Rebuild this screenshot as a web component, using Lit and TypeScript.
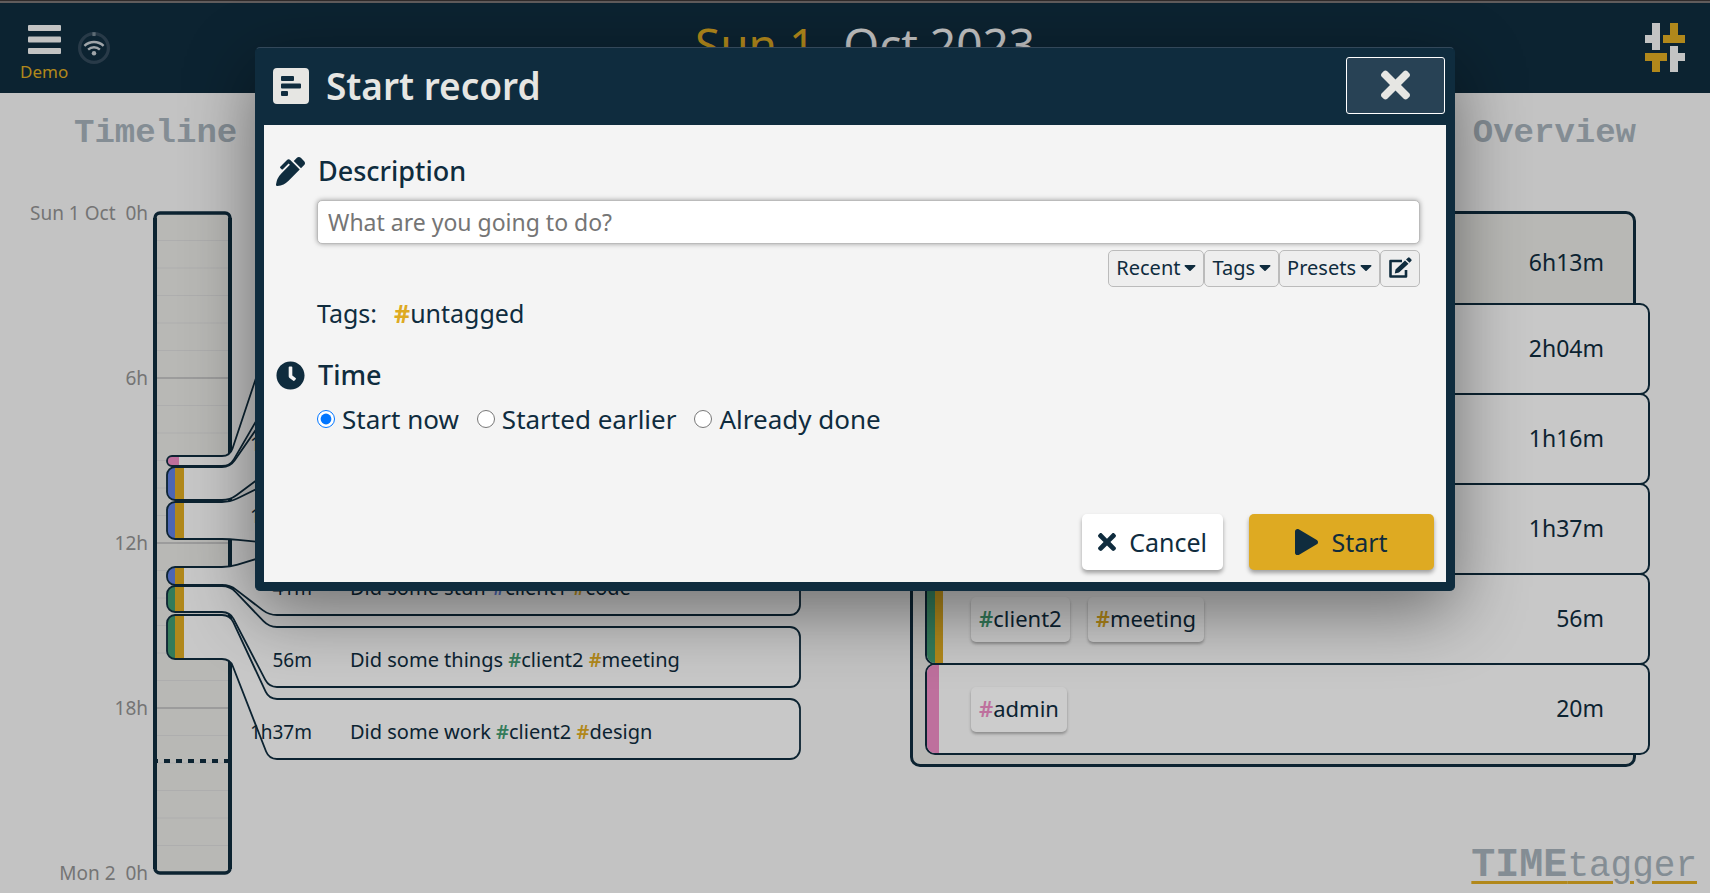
import { LitElement, html, svg, css } from "lit";
import { customElement, property, state } from "lit/decorators.js";

interface TagInfo {
  name: string;
  color: string;
}

interface TimelineRecord {
  from: number;
  to: number;
  duration: string;
  text: string;
  tags: TagInfo[];
  stripes: string[];
}

interface OverviewRow {
  duration: string;
  tags: TagInfo[];
  stripes: string[];
}

const BLUE = "#6080e0";
const GOLD = "#deaa22";
const GREEN = "#419a71";
const PINK = "#ee8dc5";
const NAVY = "#0f2c3e";

const RECORDS: TimelineRecord[] = [
  { from: 456, to: 466, duration: "20m", text: "", tags: [], stripes: [PINK] },
  { from: 467, to: 500, duration: "1h16m", text: "", tags: [], stripes: [BLUE, GOLD] },
  { from: 502, to: 539, duration: "1h23m", text: "", tags: [], stripes: [BLUE, GOLD] },
  {
    from: 567, to: 585, duration: "41m", text: "Did some stuff",
    tags: [{ name: "client1", color: BLUE }, { name: "code", color: GOLD }],
    stripes: [BLUE, GOLD],
  },
  {
    from: 586, to: 612, duration: "56m", text: "Did some things",
    tags: [{ name: "client2", color: GREEN }, { name: "meeting", color: GOLD }],
    stripes: [GREEN, GOLD],
  },
  {
    from: 615, to: 659, duration: "1h37m", text: "Did some work",
    tags: [{ name: "client2", color: GREEN }, { name: "design", color: GOLD }],
    stripes: [GREEN, GOLD],
  },
];

const OVERVIEW: OverviewRow[] = [
  { duration: "2h04m", tags: [], stripes: [BLUE, GOLD] },
  { duration: "1h16m", tags: [], stripes: [BLUE, GOLD] },
  { duration: "1h37m", tags: [], stripes: [GREEN, GOLD] },
  {
    duration: "56m",
    tags: [{ name: "client2", color: GREEN }, { name: "meeting", color: GOLD }],
    stripes: [GREEN, GOLD],
  },
  { duration: "20m", tags: [{ name: "admin", color: PINK }], stripes: [PINK] },
];

const crossIcon = html`<svg viewBox="0 0 352 512" aria-hidden="true"><path fill="currentColor" d="M242.72 256l100.07-100.07c12.28-12.28 12.28-32.19 0-44.48l-22.24-22.24c-12.28-12.28-32.19-12.28-44.48 0L176 189.28 75.93 89.21c-12.28-12.28-32.19-12.28-44.48 0L9.21 111.45c-12.28 12.28-12.28 32.19 0 44.48L109.28 256 9.21 356.07c-12.28 12.28-12.28 32.19 0 44.48l22.24 22.24c12.28 12.28 32.2 12.28 44.48 0L176 322.72l100.07 100.07c12.28 12.28 32.2 12.28 44.48 0l22.24-22.24c12.28-12.28 12.28-32.19 0-44.48L242.72 256z"/></svg>`;

const penIcon = html`<svg viewBox="0 0 512 512" aria-hidden="true"><path fill="currentColor" d="M497.94 74.17l-60.11-60.11c-18.75-18.75-49.16-18.75-67.91 0l-56.55 56.55 128.02 128.02 56.55-56.55c18.75-18.75 18.75-49.15 0-67.91zm-246.8-20.53c-15.62-15.62-40.94-15.62-56.56 0L75.8 172.43c-6.25 6.25-6.25 16.38 0 22.62l22.63 22.63c6.25 6.25 16.38 6.25 22.63 0l101.82-101.82 22.63 22.62L93.95 290.03A327.038 327.038 0 0 0 .17 485.11l-.03.23c-1.7 15.28 11.21 28.2 26.49 26.51a327.02 327.02 0 0 0 195.34-93.8l196.79-196.79-82.77-82.77-84.85-84.85z"/></svg>`;

const clockIcon = html`<svg viewBox="0 0 512 512" aria-hidden="true"><path fill="currentColor" d="M256,8C119,8,8,119,8,256S119,504,256,504,504,393,504,256,393,8,256,8Zm92.49,313h0l-20,25a16,16,0,0,1-22.49,2.5h0l-67-49.72a40,40,0,0,1-15-31.23V112a16,16,0,0,1,16-16h32a16,16,0,0,1,16,16V256l58,42.5A16,16,0,0,1,348.49,321Z"/></svg>`;

const playIcon = html`<svg viewBox="0 0 448 512" aria-hidden="true"><path fill="currentColor" d="M424.4 214.7L72.4 6.6C43.8-10.3 0 6.1 0 47.9V464c0 37.5 40.7 60.1 72.4 41.3l352-208c31.4-18.5 31.5-64.1 0-82.6z"/></svg>`;

const recordIcon = html`<svg viewBox="0 0 36 36" aria-hidden="true"><path fill="currentColor" fill-rule="evenodd" d="M4 0H32a4 4 0 0 1 4 4V32a4 4 0 0 1-4 4H4a4 4 0 0 1-4-4V4a4 4 0 0 1 4-4ZM9 8a1 1 0 0 0-1 1v3a1 1 0 0 0 1 1H20a1 1 0 0 0 1-1V9a1 1 0 0 0-1-1ZM9 15.5a1 1 0 0 0-1 1v3a1 1 0 0 0 1 1H27a1 1 0 0 0 1-1v-3a1 1 0 0 0-1-1ZM9 23a1 1 0 0 0-1 1v3a1 1 0 0 0 1 1H14a1 1 0 0 0 1-1V24a1 1 0 0 0-1-1Z"/></svg>`;

const caretIcon = html`<svg viewBox="0 0 12 8" aria-hidden="true"><path fill="currentColor" d="M1.2 1H10.8a.7.7 0 0 1 .5 1.2L6.6 6.8a.9.9 0 0 1-1.2 0L.7 2.2A.7.7 0 0 1 1.2 1Z"/></svg>`;

const editIcon = html`<svg viewBox="0 0 24 22" aria-hidden="true">
  <path fill="none" stroke="currentColor" stroke-width="2.6" stroke-linejoin="round" d="M14 4H2.5V19.500H18V13"/>
  <path fill="currentColor" d="M7.500 12.500L17 3.500L20.500 6.800L11 15.500L6.800 16.500ZM18 2.600L20 .8a1.200 1.200 0 0 1 1.700 0L23.200 2.300a1.200 1.200 0 0 1 0 1.700L21.500 5.800Z"/>
</svg>`;

@customElement("day-timeline")
export class DayTimeline extends LitElement {
  @property({ attribute: false }) records: TimelineRecord[] = [];

  static styles = css`
    :host {
      display: block;
    }
    .chart {
      display: block;
      width: 100%;
      font-family: "Noto Sans", sans-serif;
    }
    .hour-label {
      font-size: 19px;
      fill: #929292;
      text-anchor: end;
      white-space: pre;
    }
    .record-text {
      font-size: 20px;
      fill: #0f2c3e;
    }
    .record-time {
      font-size: 19px;
      fill: #0f2c3e;
      text-anchor: end;
    }
  `;

  private cardTop(index: number) {
    return 339 + 72 * index;
  }

  private ribbon(r: TimelineRecord, index: number) {
    const top = this.cardTop(index);
    const bottom = top + 60;
    const left = 167;
    const radius = Math.min(8, (r.to - r.from) / 2);
    // Unit step along each slanted connector, used to round its two ends.
    const bend = (y0: number, y1: number) => {
      const dx = 39;
      const len = Math.hypot(dx, y1 - y0);
      return { x: (8 * dx) / len, y: (8 * (y1 - y0)) / len };
    };
    const a = bend(r.from, top);
    const b = bend(r.to, bottom);
    const outline = `M${left + radius} ${r.from} H222 Q230 ${r.from} ${230 + a.x} ${r.from + a.y}
      L${269 - a.x} ${top - a.y} Q269 ${top} 277 ${top} H790 A10 10 0 0 1 800 ${top + 10} V${bottom - 10}
      A10 10 0 0 1 790 ${bottom} H277 Q269 ${bottom} ${269 - b.x} ${bottom - b.y}
      L${230 + b.x} ${r.to + b.y} Q230 ${r.to} 222 ${r.to} H${left + radius}
      A${radius} ${radius} 0 0 1 ${left} ${r.to - radius} V${r.from + radius} A${radius} ${radius} 0 0 1 ${left + radius} ${r.from} Z`;
    const barWidth = r.stripes.length === 1 ? 12 : 8;
    return svg`
      <clipPath id="clip-${index}"><path d=${outline} /></clipPath>
      <path d=${outline} fill="#fafafa" />
      <g clip-path="url(#clip-${index})">
        ${r.stripes.map(
          (c, i) => svg`<rect x=${167 + i * 8} y=${r.from} width=${barWidth + i} height=${r.to - r.from} fill=${c} />`,
        )}
      </g>
      <path d=${outline} fill="none" stroke=${NAVY} stroke-width="1.800" />
      <text class="record-time" x="312" y=${top + 40}>${r.duration}</text>
      ${r.text
        ? svg`<text class="record-text" x="350" y=${top + 40}>${r.text}${r.tags.map(
            (t) => svg`<tspan fill=${t.color} font-weight="600"> #</tspan><tspan>${t.name}</tspan>`,
          )}</text>`
        : null}`;
  }

  render() {
    const hours = Array.from({ length: 23 }, (_, i) => i + 1);
    const labels: [number, string][] = [
      [0, "Sun 1 Oct  0h"],
      [6, "6h"],
      [12, "12h"],
      [18, "18h"],
      [24, "Mon 2  0h"],
    ];
    return html`
      <svg class="chart" viewBox="0 200 855 693" role="img" aria-label="Timeline of records">
        <rect x="155" y="213" width="75" height="660" rx="5" fill="#e6e6e3" />
        ${hours.map(
          (h) => svg`<line x1="157" x2="228" y1=${213 + h * 27.5} y2=${213 + h * 27.5}
            stroke=${h % 6 ? "#dadada" : "#c4c4c4"} stroke-width=${h % 6 ? 1 : 2} />`,
        )}
        <path d="M155 218V869M230 218V869" stroke=${NAVY} stroke-width="4" />
        <rect x="155" y="213" width="75" height="660" rx="5" fill="none" stroke=${NAVY} stroke-width="3.500" />
        <path d="M155 761H230" stroke=${NAVY} stroke-width="4" stroke-dasharray="6 6" stroke-dashoffset="3" />
        ${labels.map(([h, text]) => svg`<text class="hour-label" x="148" y=${220 + h * 27.5}>${text}</text>`)}
        ${this.records.map((r, i) => this.ribbon(r, i))}
      </svg>
    `;
  }
}

@customElement("day-overview")
export class DayOverview extends LitElement {
  @property({ attribute: false }) rows: OverviewRow[] = [];

  static styles = css`
    :host {
      display: block;
    }
    .panel {
      border: 3px solid #0f2c3e;
      border-radius: 10px;
      background: #e6e6e3;
      padding-bottom: 9px;
      font-size: 23px;
      line-height: 32px;
    }
    .total {
      display: flex;
      align-items: center;
      justify-content: flex-end;
      height: 89px;
      padding: 6px 29px 0 0;
      box-sizing: border-box;
    }
    .row {
      display: flex;
      align-items: center;
      height: 92px;
      box-sizing: border-box;
      margin: 0 -17px -2px 12px;
      padding-right: 44px;
      border: 2px solid #0f2c3e;
      border-radius: 10px;
      background: #fafafa;
      overflow: hidden;
    }
    .row:last-child {
      margin-bottom: 0;
    }
    .stripes {
      display: flex;
      align-self: stretch;
      width: 44px;
    }
    .stripe {
      width: 8px;
    }
    .stripe:only-child {
      width: 12px;
    }
    .chips {
      display: flex;
      gap: 18px;
      flex: 1;
    }
    .chip {
      height: 45px;
      padding: 0 8px 2px;
      border: 0;
      border-radius: 5px;
      background: #fff;
      box-shadow: 0 2px 3px rgba(0, 0, 0, 0.3);
      color: #0f2c3e;
      font: inherit;
      font-size: 22px;
    }
    .value {
      padding-bottom: 2px;
    }
    .hash {
      font-weight: 600;
    }
  `;

  render() {
    return html`
      <div class="panel">
        <div class="total">6h13m</div>
        ${this.rows.map(
          (r) => html`<div class="row">
            <div class="stripes">
              ${r.stripes.map((c) => html`<div class="stripe" style="background:${c}"></div>`)}
            </div>
            <div class="chips">
              ${r.tags.map(
                (t) => html`<button class="chip"><span class="hash" style="color:${t.color}">#</span>${t.name}</button>`,
              )}
            </div>
            <div class="value">${r.duration}</div>
          </div>`,
        )}
      </div>
    `;
  }
}

@customElement("record-dialog")
export class RecordDialog extends LitElement {
  @state() private mode = "now";

  static styles = css`
    :host {
      display: block;
      box-sizing: border-box;
      width: 1200px;
      max-width: 90%;
      border-radius: 5px;
      background: #0f2c3e;
      border: 1px solid #33485a;
      border-bottom: 0;
      border-left-color: #0f2c3e;
      border-right-color: #0f2c3e;
      padding: 0 8px 9px;
      box-shadow: 0 20px 70px rgba(0, 0, 0, 0.45);
      color: #0f2c3e;
    }
    svg {
      display: block;
      flex: none;
    }
    button {
      font: inherit;
      color: inherit;
      cursor: pointer;
    }
    .title-bar {
      display: flex;
      align-items: center;
      height: 77px;
      padding: 0 1px 2px 9px;
      box-sizing: border-box;
      color: #e6e6e3;
    }
    .title-bar > svg {
      width: 36px;
    }
    .title {
      flex: 1;
      margin: 0 0 0 17px;
      font-size: 37px;
      font-weight: 600;
      line-height: 48px;
    }
    .close {
      display: flex;
      align-items: center;
      justify-content: center;
      width: 99px;
      height: 57px;
      border: 1px solid #fff;
      border-radius: 3px;
      background: #284255;
    }
    .close svg {
      width: 29px;
    }
    .body {
      display: flex;
      flex-direction: column;
      background: #f4f4f4;
      padding: 26px 12px 12px;
    }
    .heading {
      display: flex;
      align-items: center;
      gap: 13px;
      margin: 0;
      font-size: 27px;
      font-weight: 500;
      line-height: 40px;
    }
    .heading svg {
      width: 29px;
    }
    .indent {
      margin: 0 14px 0 41px;
    }
    .description {
      display: block;
      width: 100%;
      height: 44px;
      box-sizing: border-box;
      margin-top: 9px;
      padding: 0 10px;
      border: 1px solid #bbb;
      border-radius: 5px;
      background: #fff;
      box-shadow: 0 0 5px rgba(0, 0, 0, 0.35);
      font: inherit;
      font-size: 23px;
      color: inherit;
    }
    .description::placeholder {
      color: #757575;
      opacity: 1;
    }
    .tools {
      display: flex;
      justify-content: flex-end;
      margin-top: 6px;
    }
    .tool {
      display: flex;
      align-items: center;
      gap: 4px;
      height: 37px;
      padding: 0 7px 2px;
      border: 1px solid #bbb;
      border-radius: 5px;
      background: #eee;
      font-size: 20px;
    }
    .tool svg {
      width: 12px;
    }
    .tool .edit svg {
      width: 24px;
    }
    .tags {
      display: flex;
      gap: 17px;
      margin-top: 10px;
      font-size: 25px;
      line-height: 32px;
    }
    .hash {
      color: #deaa22;
      font-weight: 700;
    }
    .time {
      margin-top: 26px;
    }
    .choices {
      display: flex;
      gap: 18px;
      border: 0;
      padding: 0;
      margin-top: 8px;
      font-size: 26px;
      line-height: 32px;
    }
    .choice {
      display: flex;
      align-items: center;
      gap: 7px;
    }
    .choice input {
      width: 18px;
      height: 18px;
      margin: 0;
      accent-color: #0075ff;
    }
    .actions {
      display: flex;
      justify-content: flex-end;
      gap: 26px;
      margin-top: 79px;
    }
    .action {
      display: flex;
      align-items: center;
      justify-content: center;
      gap: 13px;
      height: 56px;
      padding: 0 16px;
      border: 0;
      border-radius: 5px;
      background: #fff;
      box-shadow: 0 3px 4px rgba(0, 0, 0, 0.35);
      font-size: 25px;
    }
    .action svg {
      width: 18px;
    }
    .primary {
      min-width: 185px;
      background: #deaa22;
    }
    .primary svg {
      width: 23px;
    }
  `;

  private choice(value: string, label: string) {
    return html`<label class="choice">
      <input type="radio" name="mode" value=${value} .checked=${this.mode === value} @change=${() => (this.mode = value)} />
      ${label}
    </label>`;
  }

  render() {
    return html`
      <header class="title-bar">
        ${recordIcon}
        <h1 class="title">Start record</h1>
        <button class="close" aria-label="Close">${crossIcon}</button>
      </header>
      <div class="body">
        <h2 class="heading">${penIcon}<label for="description">Description</label></h2>
        <div class="indent">
          <input class="description" id="description" type="text" placeholder="What are you going to do?" />
          <div class="tools">
            <button class="tool">Recent ${caretIcon}</button>
            <button class="tool">Tags ${caretIcon}</button>
            <button class="tool">Presets ${caretIcon}</button>
            <button class="tool" aria-label="Edit presets"><span class="edit">${editIcon}</span></button>
          </div>
          <div class="tags"><span>Tags:</span><span><span class="hash">#</span>untagged</span></div>
        </div>
        <h2 class="heading time">${clockIcon}Time</h2>
        <fieldset class="choices indent" aria-label="Time">
          ${this.choice("now", "Start now")} ${this.choice("earlier", "Started earlier")}
          ${this.choice("done", "Already done")}
        </fieldset>
        <div class="actions">
          <button class="action">${crossIcon}Cancel</button>
          <button class="action primary">${playIcon}Start</button>
        </div>
      </div>
    `;
  }
}

@customElement("app-root")
export class AppRoot extends LitElement {
  static styles = css`
    :host {
      display: block;
      position: relative;
      font-family: "Noto Sans", sans-serif;
      color: #0f2c3e;
    }
    .page {
      display: flex;
      flex-direction: column;
      min-height: 100vh;
      box-sizing: border-box;
      border-top: 1px solid #3c3636;
      background: #f4f4f4;
    }
    .top {
      display: flex;
      justify-content: space-between;
      height: 92px;
      box-sizing: border-box;
      border-top: 2px solid #7a7474;
      background: #0f2c3e;
    }
    .side {
      display: flex;
      flex: 1;
      gap: 10px;
      padding: 22px 20px 0;
    }
    .side.end {
      justify-content: flex-end;
      padding: 20px 25px 0;
    }
    .menu {
      display: flex;
      flex-direction: column;
      align-items: center;
      align-self: flex-start;
      gap: 7px;
      padding: 0;
      border: 0;
      background: none;
      font: inherit;
      font-size: 17px;
      line-height: 22px;
      color: #deaa22;
    }
    .menu svg {
      width: 33px;
      height: 29px;
      display: block;
    }
    .sync {
      width: 32px;
      height: 32px;
      margin-top: 7px;
    }
    .logo {
      width: 40px;
      height: 49px;
    }
    .date {
      display: flex;
      gap: 28px;
      padding: 11px 0 0 30px;
      font-size: 46px;
      line-height: 60px;
      color: #f4f4f4;
    }
    .day {
      color: #deaa22;
    }
    .main {
      display: flex;
      flex: 1;
    }
    .column {
      display: flex;
      flex: 1;
      flex-direction: column;
      min-width: 0;
    }
    .caption {
      margin: 0;
      padding: 20px 74px 47px;
      font: bold 34px/40px "Liberation Mono", monospace;
      color: #a5b1ba;
    }
    .column .right {
      padding-bottom: 58px;
      text-align: right;
    }
    .overview {
      margin: 0 74px 0 55px;
    }
    .brand {
      align-self: flex-end;
      margin: auto 13px 0 0;
      padding-bottom: 4px;
      font: 36px/44px "Liberation Mono", monospace;
      color: #a5b1ba;
      text-decoration: underline 3px #deaa22;
      text-underline-offset: 5px;
    }
    .brand b {
      font-size: 40px;
    }
    .backdrop {
      position: absolute;
      inset: 0;
      display: flex;
      align-items: flex-start;
      justify-content: center;
      padding-top: 47px;
      background: rgba(0, 0, 0, 0.2);
    }
  `;

  render() {
    return html`
      <div class="page">
        <header class="top">
          <div class="side">
            <button class="menu">
              <svg viewBox="0 0 33 29" aria-hidden="true">
                <g fill="#f4f4f4">
                  <rect width="33" height="6" rx="1" />
                  <rect y="11.500" width="33" height="6" rx="1" />
                  <rect y="23" width="33" height="6" rx="1" />
                </g>
              </svg>
              Demo
            </button>
            <svg class="sync" viewBox="0 0 30 30" role="img" aria-label="Connected">
              <circle cx="15" cy="15" r="13.500" fill="none" stroke="#33495a" stroke-width="3" />
              <path d="M15 .2v3.600" stroke="#768793" stroke-width="3" />
              <g fill="none" stroke="#c8cfd4" stroke-width="2.200">
                <path d="M6 13a13 13 0 0 1 18 0" />
                <path d="M9.500 16.500a8 8 0 0 1 11 0" />
              </g>
              <circle cx="15" cy="20" r="2.100" fill="#c8cfd4" />
            </svg>
          </div>
          <div class="date"><span class="day">Sun 1</span><span>Oct 2023</span></div>
          <div class="side end">
            <svg class="logo" viewBox="0 0 40 49" role="img" aria-label="TimeTagger">
              <path fill="#f4f4f4" d="M7 0h8v27H7v-7H0v-8h7ZM25 23h8v7h7v8h-7v11h-8Z" />
              <path fill="#deaa22" d="M25 0h8v12h7v8H18v-8h7ZM0 30h22v8h-7v11H7V38H0Z" />
            </svg>
          </div>
        </header>
        <main class="main">
          <section class="column">
            <h2 class="caption">Timeline</h2>
            <day-timeline .records=${RECORDS}></day-timeline>
          </section>
          <section class="column">
            <h2 class="caption right">Overview</h2>
            <day-overview class="overview" .rows=${OVERVIEW}></day-overview>
            <div class="brand"><b>TIME</b>tagger</div>
          </section>
        </main>
      </div>
      <div class="backdrop"><record-dialog role="dialog" aria-label="Start record"></record-dialog></div>
    `;
  }
}
